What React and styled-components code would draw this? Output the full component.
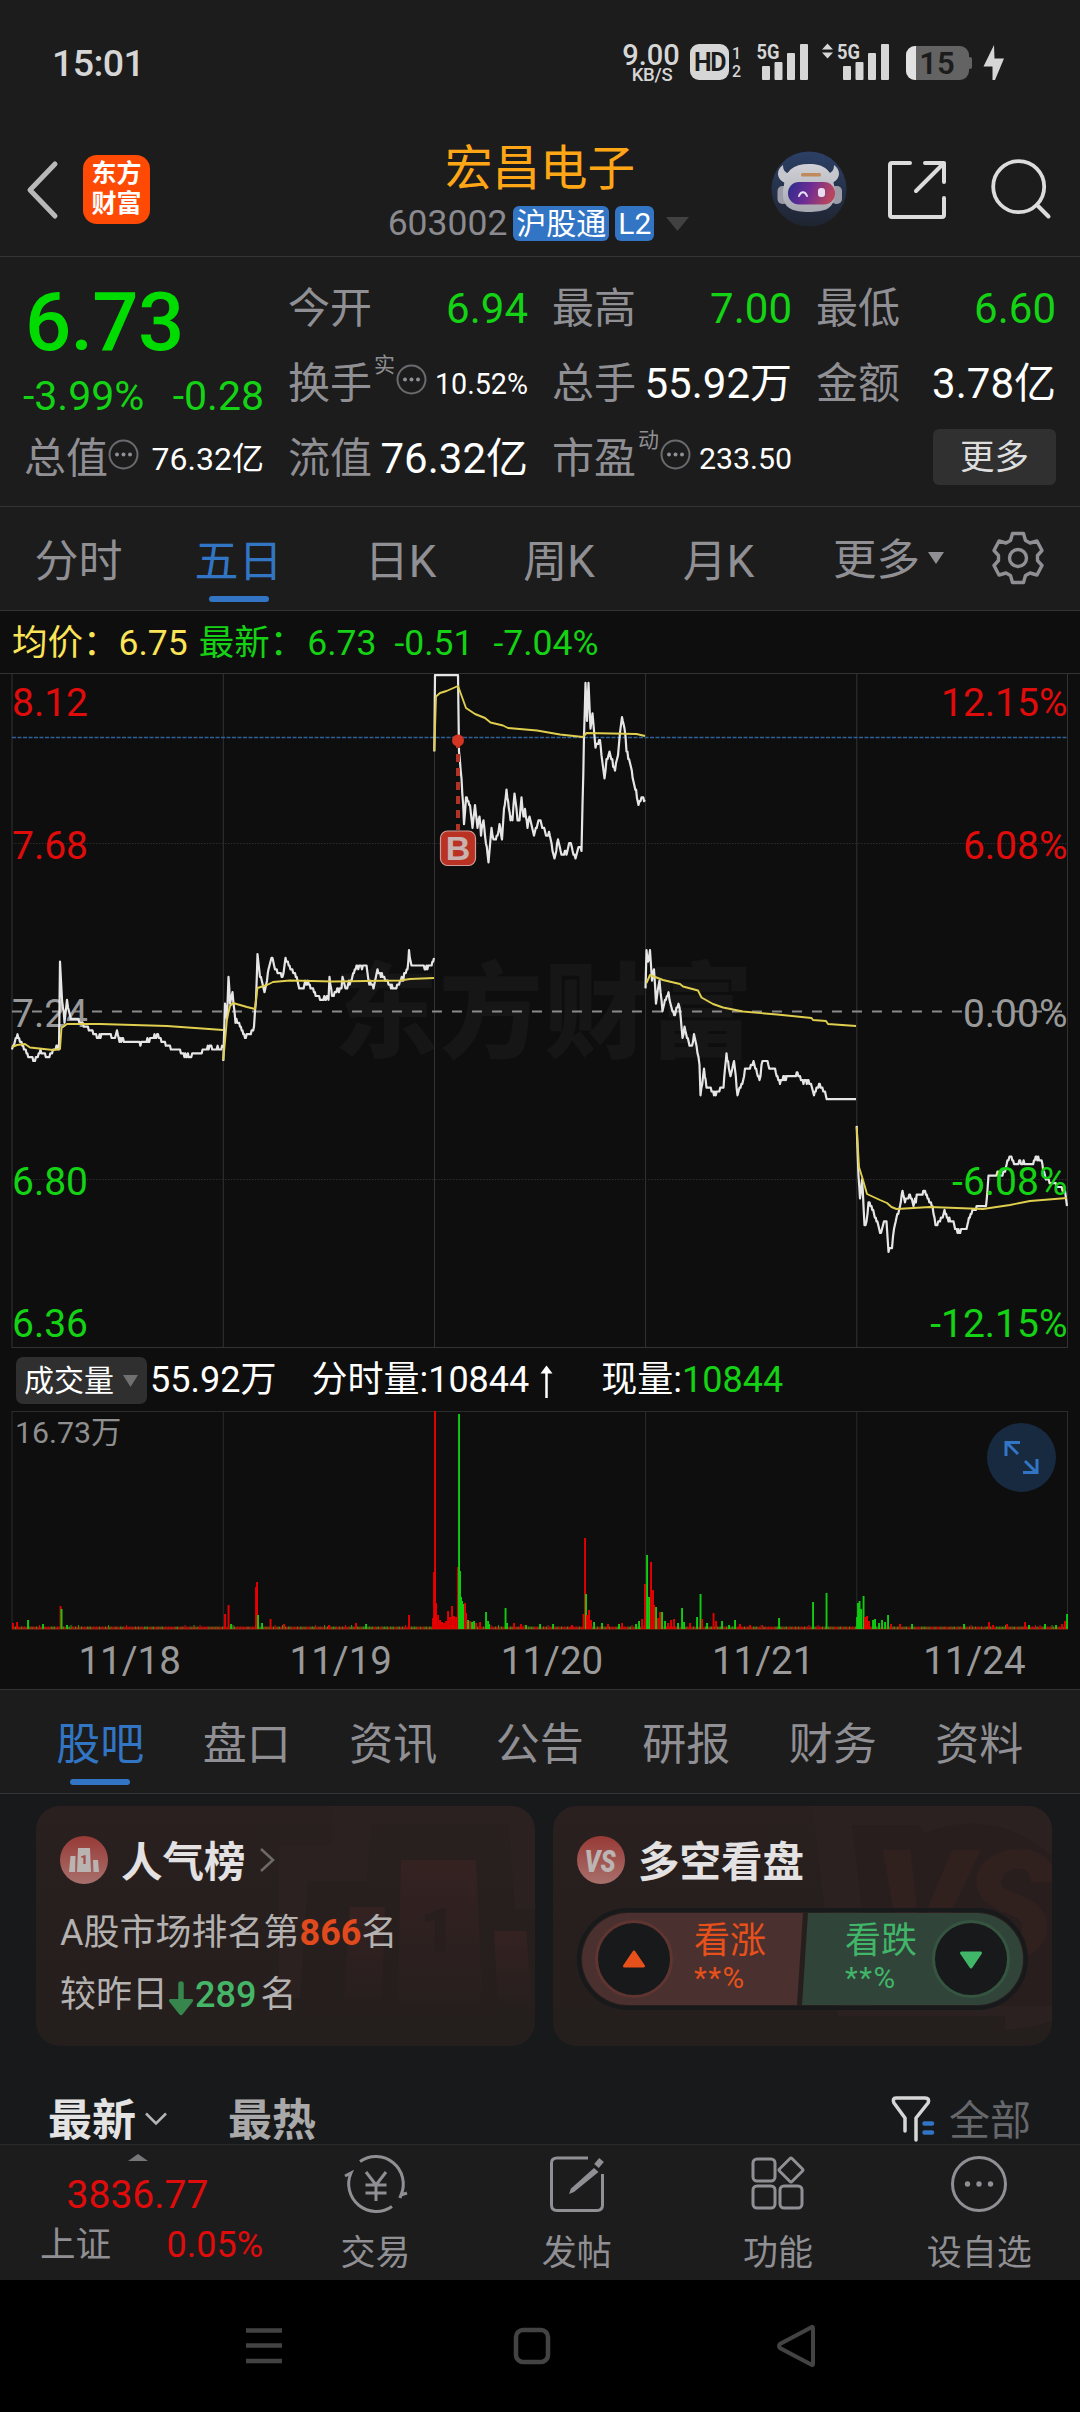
import React from 'react'
import styled, { createGlobalStyle } from 'styled-components'

const GlobalStyle = createGlobalStyle`
  * { box-sizing: border-box; }
  body {
    margin: 0;
    background: #000;
    font-family: Roboto, "Noto Sans CJK SC", sans-serif;
    line-height: 1.2;
  }
  svg { display: block; flex: none; overflow: visible; }
`;

const RED = '#e00b0b';
const GREEN = '#14d214';
const GRAY = '#8f8f94';
const BLUE = '#3275c4';

const Screen = styled.div`
  width: 1080px;
  height: 2412px;
  display: flex;
  flex-direction: column;
  background: #1c1c1c;
  overflow: hidden;
  white-space: nowrap;
`;

/* ---------- status bar ---------- */

const StatusBar = styled.div`
  height: 110px;
  padding: 42px 76px 0 52px;
  display: flex;
  justify-content: space-between;
  align-items: flex-start;
  color: #d6d6d6;
`;

const Clock = styled.div`
  font-size: 37.5px;
  line-height: 43px;
  font-weight: 500;
  letter-spacing: -0.6px;
`;

const StatusIcons = styled.div`
  display: flex;
  height: 40px;
`;

const NetSpeed = styled.div`
  width: 60px;
  margin-right: 9px;
  display: flex;
  flex-direction: column;
  align-items: center;
  font-size: 29px;
  line-height: 27px;
  font-weight: 500;
`;

const NetUnit = styled.span`
  font-size: 18.5px;
  line-height: 13px;
  padding-left: 2px;
  letter-spacing: -0.3px;
`;

const HdBadge = styled.div`
  width: 39px;
  height: 36px;
  margin: 2px 3px 0 0;
  border-radius: 9px;
  background: #d6d6d6;
  color: #1c1c1c;
  font-size: 25px;
  line-height: 37px;
  font-weight: 700;
  text-align: center;
  letter-spacing: -1.5px;
`;

const SimIndex = styled.div`
  width: 9px;
  margin-right: 15px;
  padding-top: 3px;
  font-size: 16px;
  line-height: 17.5px;
  font-weight: 500;
  display: flex;
  flex-direction: column;
`;

/* ---------- header ---------- */

const Header = styled.div`
  height: 147px;
  padding: 0 27px 0 27px;
  display: flex;
  align-items: flex-start;
  border-bottom: 1px solid #333;
`;

const Logo = styled.div`
  width: 67px;
  height: 69px;
  margin: 45px 0 0 26px;
  padding-top: 4px;
  border-radius: 14px;
  background: #ff4a05;
  color: #fff;
  font-size: 25px;
  line-height: 30px;
  font-weight: 700;
  text-align: center;
  display: flex;
  flex-direction: column;
`;

const TitleBlock = styled.div`
  flex: 1;
  display: flex;
  flex-direction: column;
  align-items: center;
  padding: 31px 0 0 159px;
`;

const StockName = styled.div`
  font-size: 47.5px;
  line-height: 56px;
  height: 65px;
  color: #ffa617;
`;

const CodeRow = styled.div`
  display: flex;
  align-items: center;
  gap: 6px;
  height: 35px;
  color: #8a8a8f;
  font-size: 35.5px;
`;

const Tag = styled.span`
  height: 35px;
  padding: 0 3px;
  border-radius: 6px;
  background: ${BLUE};
  color: #fff;
  font-size: 30px;
  line-height: 36px;
`;

const HeaderIcons = styled.div`
  display: flex;
  padding-top: 41px;
`;

/* ---------- quote ---------- */

const Quote = styled.div`
  height: 250px;
  padding: 14px 25px 0;
  display: grid;
  grid-template-columns: repeat(4, 239px);
  grid-template-rows: 75px 75px 75px;
  column-gap: 25px;
  border-bottom: 1px solid #333;
`;

const PriceCell = styled.div`
  grid-row: span 2;
  display: flex;
  flex-direction: column;
  color: ${GREEN};
`;

const Price = styled.div`
  height: 88px;
  font-size: 81.5px;
  line-height: 102px;
  letter-spacing: -0.8px;
  font-weight: 500;
  color: #00dc00;
`;

const Change = styled.div`
  display: flex;
  justify-content: space-between;
  margin-top: 12px;
  margin-left: -2px;
  font-size: 41px;
  line-height: 50px;
`;

const Cell = styled.div`
  display: flex;
  align-items: center;
  justify-content: space-between;
  color: ${GRAY};
  font-size: 42px;
  margin-left: -1px;
  padding-top: 2px;
`;

const CellLabel = styled.span`
  display: flex;
  align-items: center;
`;

const Sup = styled.sup`
  font-size: 21px;
  line-height: 24px;
  margin: -38px 1px 0 2px;
`;

const Value = styled.span`
  color: ${p => p.$color || '#fff'};
  font-size: ${p => p.$size || 42}px;
`;

const MoreButton = styled.div`
  width: 123px;
  height: 56px;
  margin: -5px 0 0 auto;
  border-radius: 6px;
  background: #303030;
  color: #dedede;
  font-size: 34.5px;
  line-height: 56px;
  text-align: center;
`;

/* ---------- period tabs ---------- */

const PeriodTabs = styled.div`
  height: 104px;
  display: flex;
  border-bottom: 1px solid #333;
`;

const Tab = styled.div`
  width: ${p => p.$w}px;
  height: 103px;
  display: flex;
  flex-direction: column;
  align-items: center;
  color: ${p => (p.$active ? BLUE : GRAY)};
  font-size: 44px;
  line-height: 110px;

  &::after {
    content: '';
    width: 60px;
    height: 6px;
    border-radius: 3px;
    margin-top: -21px;
    flex: none;
    background: ${p => (p.$active ? BLUE : 'transparent')};
  }
`;

const MoreTab = styled.div`
  display: flex;
  align-items: center;
  gap: 8px;
  margin-left: 33px;
  padding-top: 6px;
  color: ${GRAY};
  font-size: 43.5px;
  width: 193px;
`;

/* ---------- charts ---------- */

const ChartPanel = styled.div`
  background: #0e0e0e;
  height: 1079px;
  border-bottom: 1px solid #333;
`;

const Legend = styled.div`
  height: 62px;
  padding: 2px 0 0 12px;
  display: flex;
  align-items: center;
  font-size: 35.5px;
`;

const LegendItem = styled.span`
  color: ${p => p.$color || GREEN};
  margin-right: ${p => p.$mr || 0}px;
`;

const VolumeBar = styled.div`
  height: 62px;
  padding: 2px 0 0 16px;
  display: flex;
  align-items: center;
  color: #fff;
  font-size: 36px;
`;

const VolumeSelect = styled.div`
  width: 131px;
  height: 47px;
  margin: -2px 3px 0 0;
  padding: 2px 0 0 8px;
  border-radius: 7px;
  background: #2f2f2f;
  display: flex;
  align-items: center;
  gap: 9px;
  font-size: 30px;
`;

const VolumeWrap = styled.div`
  position: relative;
  height: 219px;
`;

const Expand = styled.div`
  position: absolute;
  left: 987px;
  top: 12px;
  width: 69px;
  height: 69px;
  border-radius: 50%;
  background: #172a40;
  display: flex;
  align-items: center;
  justify-content: center;
`;

const Dates = styled.div`
  display: grid;
  grid-template-columns: repeat(5, 211.2px);
  padding-left: 24px;
  color: #999;
  font-size: 38.5px;
  line-height: 61px;
  text-align: center;
`;

/* ---------- info tabs and cards ---------- */

const InfoTabs = styled.div`
  height: 104px;
  padding-left: 27px;
  display: flex;
  border-bottom: 1px solid #353535;
`;

const Feed = styled.div`
  height: 350px;
  background: #18191b;
  padding-top: 12px;
`;

const Cards = styled.div`
  display: flex;
  gap: 18px;
  padding: 0 28px 0 36px;
`;

const Card = styled.div`
  position: relative;
  width: 499px;
  height: 240px;
  padding: 30px 24px 0;
  border-radius: 24px;
  overflow: hidden;
  background: linear-gradient(#29201f, #241e1d);
`;

const CardArt = styled.svg`
  position: absolute;
  left: 0;
  top: 0;
`;

const CardBody = styled.div`
  position: relative;
`;

const CardTitle = styled.div`
  display: flex;
  align-items: center;
  gap: 13px;
  height: 48px;
  color: #e3e1e1;
  font-size: 41.5px;
  font-weight: 700;
`;

const CardName = styled.span`
  padding-top: 6px;
`;

const CardLine = styled.div`
  display: flex;
  align-items: center;
  height: 48px;
  margin-top: ${p => p.$mt}px;
  color: #b4b1b1;
  font-size: 36px;
`;

const Strong = styled.span`
  color: ${p => p.$color};
  font-weight: ${p => p.$weight};
  font-size: 36px;
  margin: 0 ${p => p.$mr}px 0 ${p => p.$ml || 0}px;
`;

const Pill = styled.div`
  display: flex;
  width: 451px;
  height: 102px;
  margin-top: 24px;
  padding: 1px;
  border: 4px solid #18191b;
  border-radius: 51px;
`;

const Half = styled.div`
  display: flex;
  align-items: center;
  justify-content: space-between;
  width: 221px;
  height: 92px;
  font-size: 36px;
  color: ${p => (p.$up ? '#e6511b' : '#41b568')};
  background: ${p => (p.$up ? '#4a302e' : '#30443a')};
  border-radius: ${p => (p.$up ? '46px 0 0 46px' : '0 46px 46px 0')};
  padding: ${p => (p.$up ? '0 37px 0 13px' : '0 13px 0 43px')};
  margin-left: ${p => (p.$up ? 0 : -1)}px;
  clip-path: ${p => (p.$up
    ? 'polygon(0 0, 100% 0, calc(100% - 6px) 100%, 0 100%)'
    : 'polygon(6px 0, 100% 0, 100% 100%, 0 100%)')};
`;

const Knob = styled.div`
  width: 78px;
  height: 78px;
  border-radius: 50%;
  border: 3px solid ${p => (p.$up ? '#5f3532' : '#355540')};
  background: #18191b;
  display: flex;
  align-items: center;
  justify-content: center;
`;

const VoteText = styled.div`
  display: flex;
  flex-direction: column;
  line-height: 39px;
`;

const VotePercent = styled.span`
  font-size: 29.5px;
  line-height: 35px;
  letter-spacing: 1.5px;
`;

const SortRow = styled.div`
  height: 98px;
  padding: 51px 49px 0 48px;
  display: flex;
  align-items: center;
  font-size: 44px;
  font-weight: 700;
  line-height: 48px;
`;

const SortItem = styled.span`
  color: ${p => p.$color};
  margin-right: ${p => p.$mr}px;
`;

const FilterLabel = styled.span`
  margin-left: 14px;
  font-size: 41px;
  font-weight: 400;
  color: #66676a;
`;

/* ---------- bottom ---------- */

const BottomBar = styled.div`
  height: 136px;
  display: flex;
  border-top: 1px solid #2a2a2a;
`;

const IndexPanel = styled.div`
  width: 275px;
  padding-top: 9px;
  display: flex;
  flex-direction: column;
  align-items: center;
  color: ${RED};
  font-size: 39px;
`;

const IndexValue = styled.div`
  margin-top: 9px;
  line-height: 51px;
`;

const IndexRow = styled.div`
  width: 275px;
  padding: 0 12px 0 40px;
  display: flex;
  justify-content: space-between;
  align-items: center;
  font-size: 36px;
  line-height: 49px;
`;

const IndexName = styled.span`
  color: ${GRAY};
  font-size: 35.5px;
`;

const Action = styled.div`
  flex: 1;
  display: flex;
  flex-direction: column;
  align-items: center;
  padding-top: 7px;
  gap: 16px;
  color: ${GRAY};
  font-size: 35px;
  line-height: 44px;
`;

const NavBar = styled.div`
  height: 132px;
  background: #000;
  display: flex;
  align-items: center;
  padding: 0 0 0 244px;
  gap: 226px;
`;

/* ---------- data ---------- */

const days = [
  [[12,1048],[17.5,1035],[21.5,1042],[26.5,1053],[29,1057],[35,1059.5],[40.5,1050.5],[48.5,1058.5],[53,1049],[59,1048],[60,963],[62,999],[64.5,1021.5],[67,1001.5],[70,1017],[75,1019],[87,1026],[97,1037],[106.5,1033],[115,1037],[117,1031.5],[119.5,1041],[143,1042.5],[158,1035],[165,1043],[170,1047.5],[176.5,1049],[187,1055.5],[200,1054],[209.5,1046.5],[223,1048]],
  [[223.3,1060],[225,1004],[227,1019],[228.5,978],[230,1004],[232.5,992.5],[235.5,1021],[240,1026],[245,1037],[250,1034],[254,1028],[256,999],[257.5,954.5],[260,977],[264.5,991.5],[267,979],[268.5,968],[271.5,958],[275,970],[280,972.5],[282.5,976],[285.5,959],[289.5,967],[295,972.5],[300,988],[308,982],[320,999],[328.5,998],[329.5,978],[332,995],[341.5,988],[342.5,978],[345.5,988],[351.5,979],[356.5,967],[366.5,966],[368.5,981.5],[373.5,987],[377.5,971],[383.5,976],[388.5,983.5],[393.5,988],[400,982],[405,975],[407.5,968],[409,951],[411.5,966],[430,967],[434,958]],
  [[434.3,751.5],[435,675],[458,675],[459,753],[461.5,776.5],[464,823],[466,798],[470,806.5],[472.5,826.5],[475,805],[477.5,828],[479.5,816.5],[481,835],[483.5,820],[485,835],[488.5,861.5],[491.5,828],[493.5,840],[497.5,836.5],[499.5,825],[502,839],[504,810],[506.5,790],[510.5,819],[512.5,819],[514.5,794],[517.5,819],[519.5,819],[521.5,797],[523.5,818],[525,810],[527.5,826.5],[529.5,816.5],[534,835],[538.5,821.5],[540.5,821],[546,835],[549,831.5],[551.5,845],[554.5,858],[558,840],[561.5,853],[566.5,853],[570,843],[573.5,853],[575.5,857],[578.5,848],[581.5,850],[582.5,806.5],[584,736.5],[585.5,682.5],[587,720],[588.5,682.5],[590.5,730],[592.5,713],[595.5,747],[600,739],[601.5,756.5],[604.5,777],[606.5,760],[609.5,751.5],[615,770],[618,756.5],[620,731.5],[622,717],[624.5,728],[626.5,750],[630,763],[634.5,785],[638.5,804],[641.5,798],[645,800]],
  [[645.5,988],[646.5,950],[648,963],[650,952],[652,980],[654,969.5],[656,1003],[658,988],[659.5,981.5],[662.5,1010],[665,1000],[668.5,992.5],[671.5,1008],[675,1016.5],[676.5,1006],[679.5,1006],[682.5,1037],[684.5,1027],[689.5,1045],[692,1046],[694,1035],[696.5,1046.5],[699.5,1063],[700.5,1095],[704,1070],[706.5,1086.5],[710,1086.5],[714,1095],[718.5,1090],[723.5,1086.5],[725,1068],[726.5,1054],[730.5,1075],[734,1061.5],[737.5,1094],[740.5,1088],[745,1070.5],[750,1068],[753.5,1061.5],[759.5,1080],[762.5,1061.5],[767.5,1061.5],[770,1069],[775,1070],[780,1083],[785,1078],[793.5,1076.5],[797.5,1073],[803.5,1083],[811,1082.5],[814,1095],[816.5,1086.5],[821.5,1086.5],[825,1092.5],[827.5,1099.2],[856,1099.2]],
  [[856.7,1126.5],[858.5,1176.5],[860,1197.5],[862,1178],[864.5,1225],[866.5,1223],[868.5,1202.5],[871.5,1208],[876.5,1221.5],[881,1232.5],[884,1221.5],[886.5,1223],[888.5,1251.5],[892,1248],[894,1228],[896.5,1216.5],[900,1205],[902.5,1191.5],[905,1201.5],[910,1196.5],[913.5,1205],[917.5,1195],[925,1192.5],[928.5,1200],[932.5,1208],[935.5,1225],[940,1220],[944.5,1211.5],[948.5,1220],[953.5,1223],[957.5,1231.5],[966.5,1228],[971.5,1213],[980,1205],[986,1205],[988.5,1176.5],[996.5,1175],[1005,1171.5],[1007.5,1161.5],[1010.5,1156],[1014,1163.5],[1031.5,1164],[1036.5,1157.5],[1041.5,1161.5],[1045,1176.5],[1051.5,1183],[1060,1186.5],[1065,1191.5],[1067,1206]],
];

const averages = [
  '12,1047 17,1045 25,1044 30,1047.5 53,1050 60,1049 61.5,1028 67,1024 100,1024 167,1026 223,1030',
  '223.3,1060 227,1019 230,1006 233,1003 247,1007 255,1009 257.5,988 267,985 273,982 290,980.5 333,981.5 400,980.5 410,979 434,978',
  '434.3,751 436,696.5 440,693 446.5,691 458,686 466,708 475,714 485,718 490.5,722.5 503,725.5 508,728 537,730.5 560,734.5 583,737 586.5,733 636.5,734 645,736',
  '646.5,983 650,975 663,980 680,984 683,986.5 698,990.5 701.5,997.5 713,1004 723,1007.5 743,1011.5 777,1014.5 811.5,1018 813,1020 826,1021 828,1024 856,1026',
  '856.7,1127 859,1167 863,1180 867,1194 880,1200 887,1203 891.5,1207 896.5,1209 930,1207 983,1209 1010,1205 1030,1201 1067,1198',
];

const spikes = [
  [13,6,1],[17,7,1],[28,9,0],[43,5,0],[60.5,23,1],[61.5,20,0],[67,4,0],[225,15,1],[228.5,24,1],[231,5,0],
  [256,42,1],[257,47,1],[258,14,0],[262,6,0],[270.5,10,1],[284,5,1],[329,4,1],[356,6,1],[366,5,0],[409,14,1],
  [433,11,1],[434,57,1],[435,218,1],[436,26,1],[438,14,1],[440,9,1],[442,7,1],[444,6,1],[446,8,1],[448,18,1],[450,12,1],[452,23,1],[454,13,1],[456,12,1],
  [458,62,1],[459,215,0],[460,58,0],[461,32,0],[462,28,0],[463,25,0],[465,26,1],[466,16,1],[468,9,0],[470,8,1],[472,7,0],[474,8,0],[476,6,1],[480,7,1],[486,17,0],[488,8,0],[489,5,0],
  [505.5,21,0],[507,6,0],[514,6,1],[521,5,1],[526,4,0],[540,5,0],[553,5,0],[572,4,1],[583.5,15,1],[585,91,1],[586,35,0],[587,14,1],[589,19,1],[591,9,1],[594,7,0],[602,6,0],[608,5,1],[619,5,0],[622,6,1],
  [636,5,0],[639,8,0],[642,10,1],[645,45,1],[647,74,0],[649,32,0],[651,67,1],[653,39,1],[654,24,1],[656,22,0],[658,11,1],[660,17,1],[662,17,0],[665,8,0],[668,6,1],[671,9,1],[674,10,1],[678,6,0],[682,21,0],[684,7,0],[690,6,1],[697,12,0],[700.5,35,0],[702,10,1],[707,6,0],[713.5,16,1],[716,8,1],[722,8,0],[729,4,0],[735,9,0],[740,5,1],[750,4,1],
  [779,11,0],[813,27,0],[826.5,36,0],[857,12,0],[858,26,0],[859.5,28,0],[861,20,0],[863.5,33,0],[865,12,1],[867,13,1],[869,8,1],[873,9,0],[875,10,0],[879,6,0],[882,9,0],[885,7,0],[888,14,0],[891,5,1],[900,5,1],[912,5,0],[964,5,0],[989,7,1],[993,4,1],[1007,5,1],[1025,7,1],[1029,4,0],[1045,5,0],[1056,4,0],[1062,5,1],[1065,8,1],[1067,15,0],
];

let seed = 7;
const random = () => {
  seed = (seed * 16807) % 2147483647;
  return seed / 2147483647;
};

const TICK = 3.82;
const toLine = (keys) => {
  const out = [];
  for (let i = 0; i < keys.length - 1; i++) {
    const [x0, y0] = keys[i];
    const [x1, y1] = keys[i + 1];
    const steps = Math.max(1, Math.round((x1 - x0) / 0.88));
    for (let s = 0; s < steps; s++) {
      const t = s / steps;
      const noise = s === 0 ? 0 : (random() - 0.5) * 3.4;
      const y = y0 + (y1 - y0) * t + noise;
      const snapped = 1011.3 + Math.round((y - 1011.3) / TICK) * TICK;
      out.push(`${(x0 + (x1 - x0) * t).toFixed(1)},${snapped.toFixed(1)}`);
    }
  }
  out.push(keys[keys.length - 1].join(','));
  return out.join(' ');
};

const lines = days.map(toLine);

const floor = Array.from({ length: 704 }, (_, i) => ({
  x: 12 + i * 1.5,
  h: random() > 0.93 ? 4 : 2.5,
  up: random() > 0.4,
}));

const columns = [12, 223.3, 434.5, 645.6, 856.8, 1067.5];

const leftLabels = [['8.12', 702.5, RED], ['7.68', 845.5, RED], ['7.24', 1013.5, '#999'], ['6.80', 1181.5, GREEN], ['6.36', 1323.5, GREEN]];
const rightLabels = [['12.15%', 702.5, RED], ['6.08%', 845.5, RED], ['0.00%', 1013.5, '#999'], ['-6.08%', 1181.5, GREEN], ['-12.15%', 1323.5, GREEN]];

/* ---------- pieces ---------- */

const Bars = ({ x }) => (
  <g fill="#d6d6d6">
    <rect x={x} y="24" width="8" height="14" rx="1" />
    <rect x={x + 12.5} y="20" width="8" height="18" rx="1" />
    <rect x={x + 25} y="11" width="8" height="27" rx="1" />
    <rect x={x + 38} y="2" width="8" height="36" rx="1" />
  </g>
);

const Dots = () => (
  <svg width="31" height="31" viewBox="0 0 31 31" style={{ marginTop: -9 }}>
    <circle cx="15.5" cy="15.5" r="14" fill="none" stroke="#6b6b6f" strokeWidth="2" />
    <circle cx="9" cy="15.5" r="2" fill="#8f8f94" />
    <circle cx="15.5" cy="15.5" r="2" fill="#8f8f94" />
    <circle cx="22" cy="15.5" r="2" fill="#8f8f94" />
  </svg>
);

const Robot = () => (
  <svg width="76" height="76" viewBox="0 0 76 76">
    <defs>
      <linearGradient id="sky" x1="0" y1="0" x2="0" y2="1">
        <stop offset="0" stopColor="#2c4066" />
        <stop offset="1" stopColor="#1f2430" />
      </linearGradient>
      <linearGradient id="visor" x1="0" y1="0" x2="1" y2="0.2">
        <stop offset="0" stopColor="#2a2c8c" />
        <stop offset="0.5" stopColor="#6d2c94" />
        <stop offset="1" stopColor="#b8455f" />
      </linearGradient>
      <linearGradient id="helmet" x1="0" y1="0" x2="0" y2="1">
        <stop offset="0" stopColor="#d0d0d6" />
        <stop offset="1" stopColor="#a8a8b2" />
      </linearGradient>
    </defs>
    <circle cx="38" cy="38" r="37.5" fill="url(#sky)" />
    <path d="M12 14C5 19 5 28 14 32L21 22C15 23 12 20 12 14ZM63 14C70 19 70 28 61 32L54 22C60 23 63 20 63 14Z" fill="#c6c6cd" />
    <rect x="6.5" y="35" width="11" height="18" rx="5" fill="#9c9ca8" />
    <rect x="60" y="35" width="11" height="18" rx="5" fill="#9c9ca8" />
    <path d="M13 34C14 20 22 13 38 13S61 20 63 34C66 46 62 55 56 58C48 62 27 62 20 58C13 55 10 46 13 34Z" fill="url(#helmet)" />
    <rect x="30" y="22" width="20" height="3.5" rx="1.5" fill="#c08a5c" />
    <rect x="17" y="31" width="47" height="22.5" rx="11" fill="url(#visor)" />
    <path d="M28 45C30 40 34 40 36 45" fill="none" stroke="#e4e0f0" strokeWidth="2" strokeLinecap="round" />
    <rect x="47" y="37" width="7" height="9" rx="3" fill="#e8dcee" />
  </svg>
);

const PriceChart = () => (
  <svg width="1080" height="676" viewBox="0 673 1080 676">
    <text x="544" y="1050" textAnchor="middle" fontSize="104" fontWeight="900" fill="#161616"
      letterSpacing="1" fontFamily='"Noto Sans CJK SC", sans-serif'>东方财富</text>
    <g stroke="#333" strokeWidth="1">
      <path d="M0 673.5H1080M12 1347.5H1068" />
      {columns.map(x => <path key={x} d={`M${x} 674V1348`} />)}
    </g>
    <path d="M12 843.5H1068M12 1179.5H1068" stroke="#2c2c2c" strokeDasharray="1.5 1.5" />
    <path d="M12 737.5H1068" stroke="#2f6096" strokeWidth="1.3" strokeDasharray="4 1.5" />
    <path d="M12 1011.5H1068" stroke="#8a8a8a" strokeWidth="2" strokeDasharray="10 10" />
    <g fontSize="39">
      {leftLabels.map(([t, y, c]) => <text key={t} x="12" y={y + 13.5} fill={c}>{t}</text>)}
    </g>
    <g fill="none" strokeLinejoin="round">
      {lines.map((l, i) => <polyline key={i} points={l} stroke="#e6e6e6" strokeWidth="2.2" />)}
      {averages.map((l, i) => <polyline key={i} points={l} stroke="#e0cf4e" strokeWidth="1.9" />)}
    </g>
    <g fontSize="39" textAnchor="end">
      {rightLabels.map(([t, y, c]) => <text key={t} x="1067.5" y={y + 13.5} fill={c}>{t}</text>)}
    </g>
    <path d="M458 742V830" stroke="#b03325" strokeWidth="4" strokeDasharray="8 6" strokeDashoffset="2" />
    <circle cx="458" cy="740.5" r="6" fill="#d23522" />
    <rect x="440.5" y="831" width="35" height="34.5" rx="7" fill="#b93223" stroke="#cf9d96" strokeWidth="1.2" />
    <text x="458" y="860" fontSize="34" fontWeight="700" textAnchor="middle" fill="#c9b3b0"
      fontFamily='"Liberation Sans", sans-serif'>B</text>
  </svg>
);

const VolumeChart = () => (
  <svg width="1080" height="219" viewBox="0 1411 1080 219">
    <g stroke="#2c2c2c" fill="none">
      <path d="M12 1411.5H1068" />
      {columns.map(x => <path key={x} d={`M${x} 1411V1629`} />)}
    </g>
    <text x="15" y="1443" fontSize="30.3" fill="#8f8f8f">16.73万</text>
    <path d="M12 1628.5H1068" stroke="#8c2a10" strokeWidth="2" />
    {floor.map((b, i) => (
      <rect key={i} x={b.x} y={1629 - b.h} width="1.1" height={b.h} fill={b.up ? '#c01010' : '#3f8a12'} />
    ))}
    {spikes.map(([x, h, up], i) => (
      <rect key={i} x={x - 0.9} y={1629 - h} width="1.9" height={h} fill={up ? '#e80000' : '#10cc10'} />
    ))}
  </svg>
);

const App = () => {
  return (
    <Screen>
      <GlobalStyle />

      <StatusBar>
        <Clock>15:01</Clock>
        <StatusIcons>
          <NetSpeed>9.00<NetUnit>KB/S</NetUnit></NetSpeed>
          <HdBadge>HD</HdBadge>
          <SimIndex><span>1</span><span>2</span></SimIndex>
          <svg width="67" height="40">
            <text x="0.5" y="17" fontSize="20.5" fontWeight="700" fill="#d6d6d6" textLength="23" lengthAdjust="spacingAndGlyphs">5G</text>
            <Bars x={6} />
          </svg>
          <svg width="82" height="40">
            <path d="M-1 7.5L4.5 1.5L10 7.5ZM-1 10.5L4.5 16.5L10 10.5Z" fill="#d6d6d6" />
            <text x="14" y="17" fontSize="20.5" fontWeight="700" fill="#d6d6d6" textLength="23" lengthAdjust="spacingAndGlyphs">5G</text>
            <Bars x={20} />
          </svg>
          <svg width="78" height="40">
            <rect x="1" y="4" width="63" height="34" rx="9" fill="#636363" />
            <rect x="63" y="15" width="4" height="12" rx="2" fill="#636363" />
            <path d="M11 4H10A9 9 0 0 0 1 13V29A9 9 0 0 0 10 38H11Z" fill="#e2e2e2" />
            <text x="32" y="32" fontSize="31" fontWeight="600" textAnchor="middle" fill="#1c1c1c">15</text>
          </svg>
          <svg width="21" height="40">
            <path d="M11 3L0.5 24.5H9.5L9.5 38H12L21 16.5H11.5Z" fill="#d6d6d6" />
          </svg>
        </StatusIcons>
      </StatusBar>

      <Header>
        <svg width="30" height="56" style={{ marginTop: 52 }}>
          <path d="M28 2L3 28L28 54" fill="none" stroke="#b9b9b9" strokeWidth="5" strokeLinecap="round" strokeLinejoin="round" />
        </svg>
        <Logo><span>东方</span><span>财富</span></Logo>
        <TitleBlock>
          <StockName>宏昌电子</StockName>
          <CodeRow>
            603002
            <Tag>沪股通</Tag>
            <Tag>L2</Tag>
            <svg width="32" height="14" viewBox="-7 0 32 14"><path d="M-1 0H22L10.5 14Z" fill="#414141" /></svg>
          </CodeRow>
        </TitleBlock>
        <HeaderIcons>
          <Robot />
          <svg width="60" height="60" viewBox="0 0 60 60" style={{ margin: '9px 0 0 40px' }}>
            <path d="M23 3H5Q3 3 3 5V55Q3 57 5 57H55Q57 57 57 55V38M38 3H57V22M56 4L29 31" fill="none" stroke="#dcdcdc" strokeWidth="4" strokeLinecap="round" strokeLinejoin="round" />
          </svg>
          <svg width="62" height="62" viewBox="0 0 62 62" style={{ margin: '7px 0 0 44px' }}>
            <circle cx="27.7" cy="28.7" r="25.5" fill="none" stroke="#dcdcdc" strokeWidth="3.8" />
            <path d="M46 47L57.5 58.5" stroke="#dcdcdc" strokeWidth="4" strokeLinecap="round" />
          </svg>
        </HeaderIcons>
      </Header>

      <Quote>
        <PriceCell>
          <Price>6.73</Price>
          <Change><span>-3.99%</span><span>-0.28</span></Change>
        </PriceCell>
        <Cell>今开<Value $color={GREEN}>6.94</Value></Cell>
        <Cell>最高<Value $color={GREEN}>7.00</Value></Cell>
        <Cell>最低<Value $color={GREEN}>6.60</Value></Cell>
        <Cell><CellLabel>换手<Sup>实</Sup><Dots /></CellLabel><Value $size={28.7}>10.52%</Value></Cell>
        <Cell>总手<Value>55.92万</Value></Cell>
        <Cell>金额<Value>3.78亿</Value></Cell>
        <Cell><CellLabel>总值<Dots /></CellLabel><Value $size={32}>76.32亿</Value></Cell>
        <Cell>流值<Value>76.32亿</Value></Cell>
        <Cell><CellLabel>市盈<Sup>动</Sup><Dots /></CellLabel><Value $size={30.3}>233.50</Value></Cell>
        <Cell><MoreButton>更多</MoreButton></Cell>
      </Quote>

      <PeriodTabs>
        <Tab $w={157}>分时</Tab>
        <Tab $w={163} $active>五日</Tab>
        <Tab $w={161}>日K</Tab>
        <Tab $w={156}>周K</Tab>
        <Tab $w={163}>月K</Tab>
        <MoreTab>
          更多
          <svg width="16" height="12" style={{ marginTop: -8 }}><path d="M0 0H16L8 12Z" fill={GRAY} /></svg>
        </MoreTab>
        <svg width="54" height="54" viewBox="-27 -27 54 54" style={{ margin: '24px 0 0 -35px' }}>
          <path d="M-5.5 -24.5H5.5L7.5 -17.5L12 -15L19 -17L24 -7.5L19.5 -2.5V2.5L24 7.5L19 17L12 15L7.5 17.5L5.5 24.5H-5.5L-7.5 17.5L-12 15L-19 17L-24 7.5L-19.5 2.5V-2.5L-24 -7.5L-19 -17L-12 -15L-7.5 -17.5Z" fill="none" stroke={GRAY} strokeWidth="3.4" strokeLinejoin="round" />
          <circle r="8.5" fill="none" stroke={GRAY} strokeWidth="3.4" />
        </svg>
      </PeriodTabs>

      <ChartPanel>
        <Legend>
          <LegendItem $color="#fbe457" $mr={11}>均价：6.75</LegendItem>
          <LegendItem $mr={2}>最新：</LegendItem>
          <LegendItem $mr={18}>6.73</LegendItem>
          <LegendItem $mr={20}>-0.51</LegendItem>
          <LegendItem>-7.04%</LegendItem>
        </Legend>
        <PriceChart />
        <VolumeBar>
          <VolumeSelect>
            成交量
            <svg width="15" height="12"><path d="M0 0H15L7.5 12Z" fill="#707070" /></svg>
          </VolumeSelect>
          <LegendItem $color="#fff" $mr={35}>55.92万</LegendItem>
          <LegendItem $color="#fff" $mr={11}>分时量:10844</LegendItem>
          <svg width="13" height="33" style={{ marginRight: 48 }}>
            <path d="M6.5 2V33" stroke="#fff" strokeWidth="2.5" />
            <path d="M0.5 8.5L6.5 0.5L12.5 8.5Z" fill="#fff" />
          </svg>
          <LegendItem $color="#fff">现量:</LegendItem>
          <LegendItem>10844</LegendItem>
        </VolumeBar>
        <VolumeWrap>
          <VolumeChart />
          <Expand>
            <svg width="35" height="35" viewBox="0 0 35 35">
              <path d="M2 16V2.5H16M3 3L14 14M33 19V32.5H19M32 32L21 21" fill="none" stroke={BLUE} strokeWidth="3" />
            </svg>
          </Expand>
        </VolumeWrap>
        <Dates>
          <span>11/18</span><span>11/19</span><span>11/20</span><span>11/21</span><span>11/24</span>
        </Dates>
      </ChartPanel>

      <InfoTabs>
        {['股吧', '盘口', '资讯', '公告', '研报', '财务', '资料'].map((t, i) => (
          <Tab key={t} $w={146.5} $active={i === 0}>{t}</Tab>
        ))}
      </InfoTabs>

      <Feed>
        <Cards>
          <Card>
            <CardArt width="499" height="240">
              <defs>
                <linearGradient id="fade" x1="0" y1="0" x2="0" y2="1">
                  <stop offset="0" stopColor="#342221" />
                  <stop offset="1" stopColor="#271f1e" />
                </linearGradient>
              </defs>
              <path d="M297 0H499V103H479L472 17H335L331 75H272L264 192H243V39H295Z" fill="#2b2120" />
              <path d="M365 54H440L446 196H362Z" fill="url(#fade)" />
              <path d="M314 101H349L346 194H308Z" fill="url(#fade)" />
              <path d="M458 125H490L496 196H462Z" fill="url(#fade)" />
              <text x="402" y="146" fontSize="62" fontWeight="900" textAnchor="middle" fill="#271e1d">1</text>
            </CardArt>
            <CardBody>
              <CardTitle>
                <svg width="48" height="48" viewBox="0 0 48 48">
                  <defs>
                    <linearGradient id="badge" x1="0" y1="0" x2="0" y2="1">
                      <stop offset="0" stopColor="#983a36" />
                      <stop offset="1" stopColor="#a8706c" />
                    </linearGradient>
                  </defs>
                  <circle cx="24" cy="24" r="24" fill="url(#badge)" />
                  <path d="M18 12H30L31 36H17ZM10.5 20H15.5L15 36H9ZM33 24H38L39 36H33.5Z" fill="#b9b3b2" />
                  <text x="24" y="28" fontSize="13" fontWeight="900" textAnchor="middle" fill="#a14e4a">1</text>
                </svg>
                <CardName>人气榜</CardName>
                <svg width="24" height="24" viewBox="-4 0 24 24">
                  <path d="M-2 1L10 12L-2 23" fill="none" stroke="#6e6a6a" strokeWidth="2.5" />
                </svg>
              </CardTitle>
              <CardLine $mt={26}>A股市场排名第<Strong $color="#e04a1c" $weight={700} $mr={0}>866</Strong>名</CardLine>
              <CardLine $mt={14}>
                较昨日
                <svg width="26" height="34" viewBox="-1 0 26 34" style={{ marginTop: 6 }}>
                  <path d="M12 2V20" stroke="#37864d" strokeWidth="5.5" strokeLinecap="round" />
                  <path d="M1 17H23Q25 18 23.5 20L13.5 32.5Q12 34 10.5 32.5L0.5 20Q-1 18 1 17Z" fill="#37864d" />
                </svg>
                <Strong $color="#45b568" $weight={500} $ml={1} $mr={4}>289</Strong>
                名
              </CardLine>
            </CardBody>
          </Card>
          <Card>
            <CardArt width="499" height="240">
              <path d="M259 0H499V215Q480 222 452 224V210H322L285 210Z" fill="#2a2120" />
              <path d="M299 19H365L372 27Q440 0 499 50V200H320Z" fill="#281e1e" />
              <text x="320" y="152" fontSize="152" fontWeight="900" fontStyle="italic" letterSpacing="-8" fill="#30211f">VS</text>
            </CardArt>
            <CardBody>
              <CardTitle>
                <svg width="48" height="48" viewBox="0 0 48 48">
                  <circle cx="24" cy="24" r="24" fill="url(#badge)" />
                  <text x="23" y="35.5" fontSize="32" fontWeight="900" fontStyle="italic" textAnchor="middle" fill="#bcb4b3" textLength="31" lengthAdjust="spacingAndGlyphs">VS</text>
                </svg>
                <CardName>多空看盘</CardName>
              </CardTitle>
              <Pill>
                <Half $up>
                  <Knob $up>
                    <svg width="24" height="20"><path d="M12 3L21.5 17H2.5Z" fill="#e6511b" stroke="#e6511b" strokeWidth="3" strokeLinejoin="round" /></svg>
                  </Knob>
                  <VoteText>看涨<VotePercent>**%</VotePercent></VoteText>
                </Half>
                <Half>
                  <VoteText>看跌<VotePercent>**%</VotePercent></VoteText>
                  <Knob>
                    <svg width="24" height="20"><path d="M12 18L21.5 4H2.5Z" fill="#41b568" stroke="#41b568" strokeWidth="3" strokeLinejoin="round" /></svg>
                  </Knob>
                </Half>
              </Pill>
            </CardBody>
          </Card>
        </Cards>
        <SortRow>
          <SortItem $color="#e3e3e3" $mr={9}>最新</SortItem>
          <svg width="22" height="14" style={{ marginRight: 61, marginTop: -4 }}>
            <path d="M1 1.5L11 11.5L21 1.5" fill="none" stroke="#b5b5b5" strokeWidth="2.5" />
          </svg>
          <SortItem $color="#a9a9aa" $mr={0}>最热</SortItem>
          <svg width="44" height="46" viewBox="0 0 44 46" style={{ marginLeft: 'auto', marginTop: -3 }}>
            <path d="M14 35V22L3 7Q1 2 5 2H34Q39 2 37 7L25 22V44" fill="none" stroke="#d6d6d6" strokeWidth="3.5" strokeLinecap="round" strokeLinejoin="round" />
            <path d="M33.5 27.5H41M33.5 36.5H41" stroke={BLUE} strokeWidth="4.5" strokeLinecap="round" />
          </svg>
          <FilterLabel>全部</FilterLabel>
        </SortRow>
      </Feed>

      <BottomBar>
        <IndexPanel>
          <svg width="20" height="7"><path d="M0 7L10 0L20 7Z" fill="#77777a" /></svg>
          <IndexValue>3836.77</IndexValue>
          <IndexRow><IndexName>上证</IndexName><span>0.05%</span></IndexRow>
        </IndexPanel>
        <Action>
          <svg width="66" height="64" viewBox="0 0 66 64" fill="none" stroke={GRAY} strokeWidth="3">
            <path d="M17 9.5A27.5 27.5 0 0 1 58 43L64 41M58 43L57 46" />
            <path d="M49 54.5A27.5 27.5 0 0 1 8 21L2 24" />
            <path d="M23 20L33 33L43 20M33 33V49M22.5 33H43.5M22.5 41H43.5" />
          </svg>
          交易
        </Action>
        <Action>
          <svg width="58" height="64" viewBox="0 0 58 64" fill="none" stroke={GRAY} strokeWidth="3">
            <path d="M40 6H9Q3.5 6 3.5 11V53Q3.5 58.5 9 58.5H49Q54.5 58.5 54.5 53V22" />
            <path d="M46 16L50.5 20L26 40L21 42L23 36.5Z" fill={GRAY} stroke="none" />
            <path d="M48.5 14L53.5 8" strokeWidth="6" />
          </svg>
          发帖
        </Action>
        <Action>
          <svg width="56" height="64" viewBox="0 0 56 64" fill="none" stroke={GRAY} strokeWidth="3">
            <rect x="3" y="7" width="22" height="22" rx="4" />
            <rect x="3" y="34" width="22" height="22" rx="4" />
            <rect x="30" y="34" width="22" height="22" rx="4" />
            <path d="M40 6.5Q41 5.5 42 6.5L52.5 17Q53.5 18 52.5 19L42 29.5Q41 30.5 40 29.5L29.5 19Q28.5 18 29.5 17Z" />
          </svg>
          功能
        </Action>
        <Action>
          <svg width="58" height="64" viewBox="0 0 58 64">
            <circle cx="29" cy="32" r="26.5" fill="none" stroke={GRAY} strokeWidth="3" />
            <circle cx="17.5" cy="32" r="2.7" fill={GRAY} />
            <circle cx="29" cy="32" r="2.7" fill={GRAY} />
            <circle cx="40.5" cy="32" r="2.7" fill={GRAY} />
          </svg>
          设自选
        </Action>
      </BottomBar>

      <NavBar>
        <svg width="40" height="44" viewBox="0 0 40 44">
          <path d="M2 6.5H38M2 21.5H38M2 37H38" stroke="#434343" strokeWidth="4.5" />
        </svg>
        <svg width="44" height="44" viewBox="0 0 44 44">
          <rect x="6" y="6" width="32" height="32" rx="7" fill="none" stroke="#434343" strokeWidth="4.5" />
        </svg>
        <svg width="44" height="44" viewBox="5 0 44 44">
          <path d="M38 4V40Q38 42 36 40.5L5 24Q3 22 5 20L36 3.5Q38 2 38 4Z" fill="none" stroke="#434343" strokeWidth="4" />
        </svg>
      </NavBar>
    </Screen>
  )
}

export default App
